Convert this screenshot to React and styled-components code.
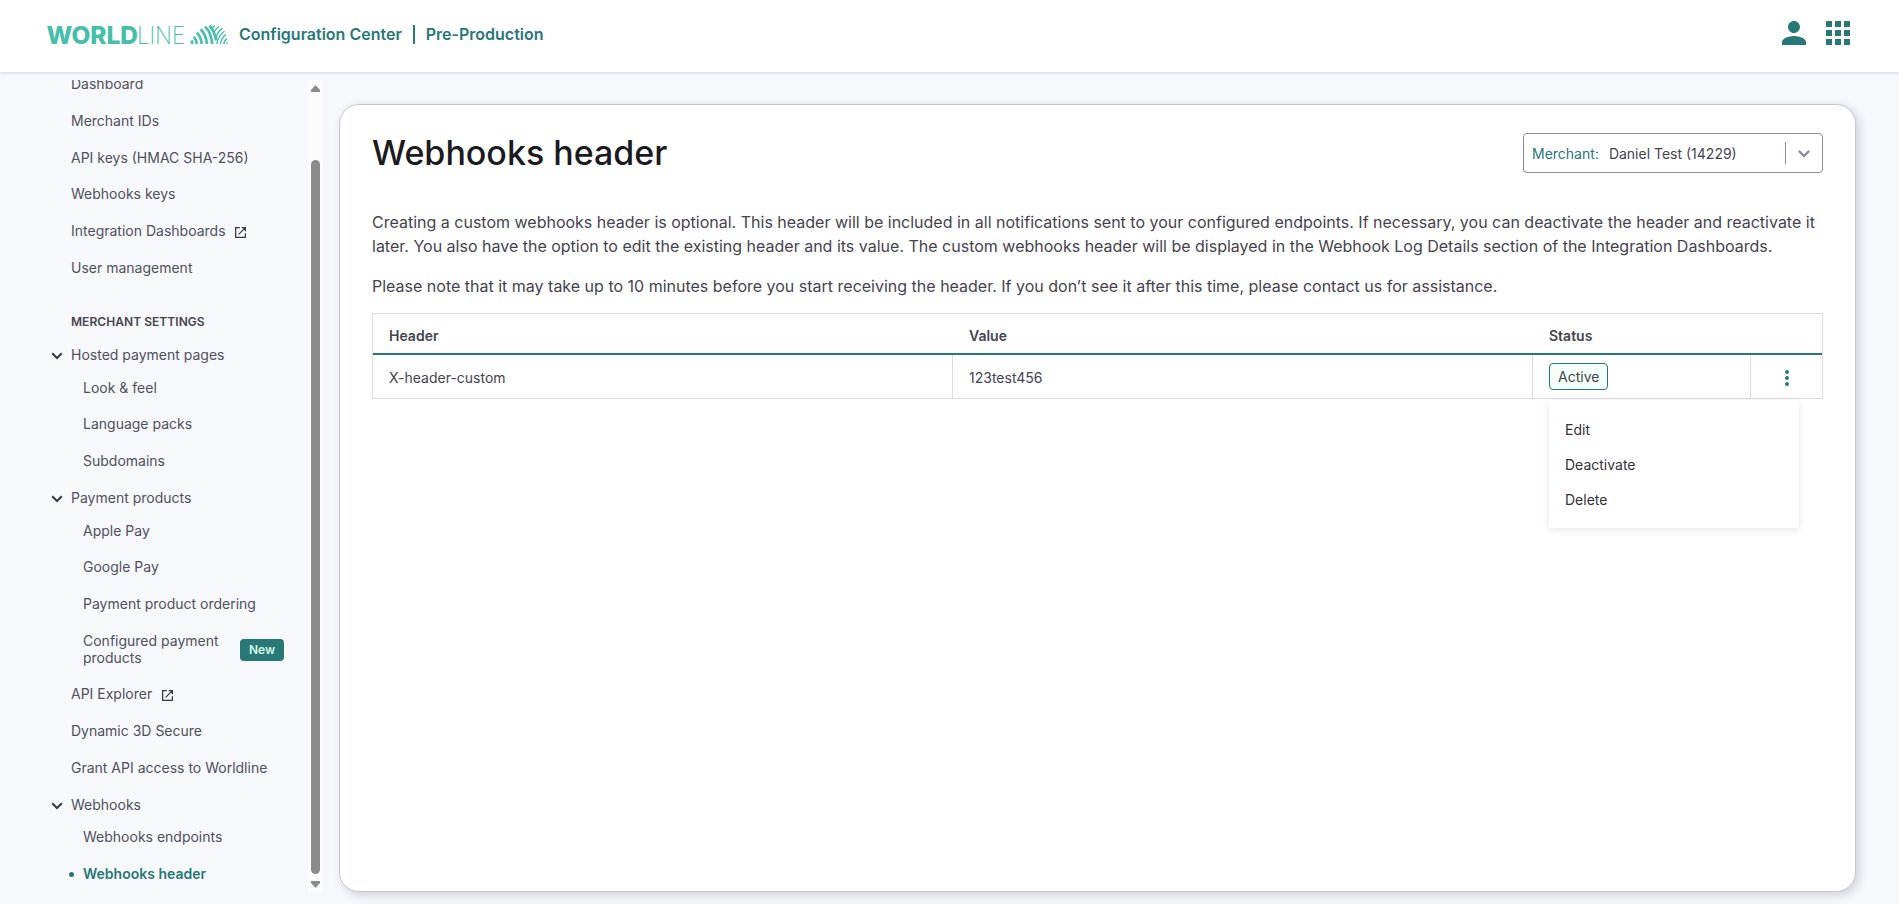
import React, { useState } from 'react';
import styled, { createGlobalStyle, css } from 'styled-components';

const GlobalStyle = createGlobalStyle`
  * {
    box-sizing: border-box;
  }

  body {
    margin: 0;
    overflow: hidden;
    background: #f7f8fc;
    color: #46434f;
    font-family: Inter, 'Liberation Sans', sans-serif;
  }
`;

const Page = styled.div`
  display: flex;
  flex-direction: column;
  height: 100vh;
`;

const TopBar = styled.header`
  display: flex;
  flex: none;
  align-items: flex-start;
  justify-content: space-between;
  height: 72px;
  padding: 0 49px 0 47px;
  background: #fff;
  box-shadow: 0 1px 3px rgba(70, 67, 79, 0.2);
`;

const Brand = styled.div`
  display: flex;
  align-items: center;
  height: 68px;
`;

const Logo = styled.svg`
  display: block;
  width: 181px;
  height: 20px;
  margin-right: 11px;
  overflow: visible;
`;

const BrandText = styled.span`
  font-size: 16px;
  font-weight: 600;
  line-height: 20px;
  color: #287877;
`;

const BrandDivider = styled.span`
  width: 2px;
  height: 19px;
  margin: 1px 11px 0;
  background: #287877;
`;

const TopActions = styled.div`
  display: flex;
  gap: 20px;
  padding-top: 21px;

  svg {
    display: block;
    width: 24px;
    height: 24px;
    fill: #287877;
  }
`;

const Body = styled.div`
  display: flex;
  flex: 1;
  min-height: 0;
  padding: 8px 43px 12px 0;
`;

const Sidebar = styled.nav`
  display: flex;
  flex-direction: column;
  justify-content: flex-end;
  width: 308px;
  padding: 0 24px 9px 51px;
  overflow: hidden;
`;

const NavRow = styled.div`
  display: flex;
  flex: none;
  align-items: center;
  margin-top: ${p => (p.$tight ? 16 : 20)}px;
  padding-left: ${p => (p.$child ? 32 : 20)}px;
  font-size: 14px;
  line-height: 16.76px;
  color: #50505c;

  ${p =>
    p.$active &&
    css`
      padding-left: 18px;
      font-weight: 600;
      color: #287877;
    `}
`;

const NavLabel = styled.span`
  ${p => p.$wrap && 'width: 157px;'}
`;

const ActiveDot = styled.span`
  width: 5px;
  height: 5px;
  margin-right: 9px;
  border-radius: 50%;
  background: #287877;
`;

const NavChevron = styled.svg`
  width: 12px;
  height: 8px;
  margin: 1px 8px 0 -20px;
  fill: none;
  stroke: #3b3944;
  stroke-width: 2;
`;

const ExternalIcon = styled.svg`
  width: 11px;
  height: 11px;
  margin: 1px 0 0 9.500px;
  fill: none;
  stroke: #3b3944;
  stroke-width: 1.4;
`;

const NavSection = styled.div`
  flex: none;
  margin: 37px 0 1px;
  padding-left: 20px;
  font-size: 12px;
  font-weight: 600;
  letter-spacing: 0.05px;
  line-height: 16px;
  color: #46434f;
`;

const NewBadge = styled.span`
  width: 44px;
  height: 22px;
  border-radius: 4px;
  background: #287877;
  color: #d5fbe7;
  font-size: 12px;
  font-weight: 600;
  line-height: 22px;
  text-align: center;
`;

const Scrollbar = styled.div`
  display: flex;
  flex: none;
  flex-direction: column;
  align-items: center;
  width: 15px;
  padding: 5px 0 4px;
  background: #fcfcfc;

  svg {
    display: block;
    width: 9px;
    height: 7px;
    fill: #8b8b8b;
  }
`;

const Thumb = styled.div`
  flex: 1;
  width: 9px;
  margin: 68px 0 7px;
  border-radius: 5px;
  background: #8b8b8b;
`;

const Card = styled.main`
  flex: 1;
  margin: 24px 0 0 16px;
  padding: 28px 32px;
  border: 1px solid #c8c8d0;
  border-radius: 20px;
  background: #fff;
  box-shadow: 3px 3px 10px rgba(70, 67, 79, 0.22);
`;

const CardHeader = styled.div`
  display: flex;
  align-items: center;
  justify-content: space-between;
  height: 40px;
  margin-bottom: 37px;
`;

const Title = styled.h1`
  margin: -1px 0 0;
  font-size: 34px;
  font-weight: 500;
  line-height: 40px;
  color: #1b1b1f;
`;

const Select = styled.div`
  display: flex;
  align-items: center;
  width: 300px;
  height: 40px;
  padding: 1px 12px 0 8px;
  border: 1px solid #8c8a9c;
  border-radius: 4px;
  font-size: 14px;
`;

const SelectLabel = styled.span`
  margin-right: 10px;
  color: #287877;
`;

const SelectValue = styled.span`
  flex: 1;
`;

const SelectDivider = styled.span`
  width: 1px;
  height: 22px;
  margin: 0 12px 2px 0;
  background: #8c8a9c;
`;

const SelectChevron = styled.svg`
  width: 12px;
  height: 8px;
  fill: none;
  stroke: #8c8a9c;
  stroke-width: 2.4;
  stroke-linecap: round;
`;

const Text = styled.p`
  margin: 0 0 16px;
  font-size: 16px;
  line-height: 24px;
`;

const Table = styled.div`
  margin-top: -1px;
  border: 1px solid #dbdae2;
  font-size: 14px;
`;

const Row = styled.div`
  display: grid;
  grid-template-columns: 580px 580px 218px 1fr;
  height: ${p => (p.$head ? 41 : 43)}px;
  border-bottom: ${p => (p.$head ? '2px solid #287877' : '0')};
  font-weight: ${p => (p.$head ? 600 : 400)};
`;

const Cell = styled.div`
  position: relative;
  display: flex;
  align-items: center;
  justify-content: ${p => (p.$center ? 'center' : 'flex-start')};
  padding: ${p => (p.$center ? '3px 0 0' : p.$divided ? '1px 16px 0' : '4px 16px 0')};
  ${p => p.$divided && 'border-right: 1px solid #dbdae2;'}
`;

const StatusTag = styled.span`
  height: 27px;
  margin-top: -1px;
  padding: 0 8px;
  border: 1px solid #287877;
  border-radius: 4px;
  background: #f3fff8;
  line-height: 25px;
`;

const MoreButton = styled.button`
  display: flex;
  padding: 0;
  border: 0;
  background: none;
  cursor: pointer;

  svg {
    width: 4px;
    height: 16px;
    fill: #287877;
  }
`;

const Menu = styled.ul`
  position: absolute;
  top: 45px;
  right: 23px;
  width: 250px;
  height: 128px;
  margin: 0;
  padding: 12px 16px;
  background: #fff;
  box-shadow: 0 2px 8px rgba(0, 0, 0, 0.1);
  list-style: none;
`;

const MenuItem = styled.li`
  line-height: 35px;
  color: #33313b;
  cursor: pointer;
`;

const navItems = [
  { label: 'Dashboard' },
  { label: 'Merchant IDs' },
  { label: 'API keys (HMAC SHA-256)' },
  { label: 'Webhooks keys' },
  { label: 'Integration Dashboards', external: true },
  { label: 'User management' },
  { section: 'MERCHANT SETTINGS' },
  { label: 'Hosted payment pages', group: true, tight: true },
  { label: 'Look & feel', child: true, tight: true },
  { label: 'Language packs', child: true },
  { label: 'Subdomains', child: true },
  { label: 'Payment products', group: true },
  { label: 'Apple Pay', child: true, tight: true },
  { label: 'Google Pay', child: true },
  { label: 'Payment product ordering', child: true },
  { label: 'Configured payment products', child: true, isNew: true },
  { label: 'API Explorer', external: true },
  { label: 'Dynamic 3D Secure' },
  { label: 'Grant API access to Worldline' },
  { label: 'Webhooks', group: true },
  { label: 'Webhooks endpoints', child: true, tight: true },
  { label: 'Webhooks header', child: true, active: true },
];

function WorldlineLogo() {
  return (
    <Logo viewBox="0 -1 181 20" fill="#46beaa">
      <text x="-0.5" y="19" fontSize="24.8" fontWeight="800" textLength="91.5" lengthAdjust="spacingAndGlyphs">
        WORLD
      </text>
      <text x="90" y="19" fontSize="24.8" fontWeight="200" textLength="48" lengthAdjust="spacingAndGlyphs">
        LINE
      </text>
      <g fill="none" stroke="#46beaa">
        <g strokeWidth="2.7">
          <path d="M145.200 19c0-1.500-.2-2.600-.7-3.600" />
          <path d="M149.800 19c-.3-3-1.300-5.300-3-7.200" />
          <path d="M154.800 19c-.5-4.600-2.100-8.300-4.900-11.300" />
          <path d="M160 19c-.6-6.200-2.700-11.200-6.400-14.800" />
          <path d="M165.200 19c-.7-8-3-13.800-7.200-17.300" />
          <path d="M169.200 15.500c-1.100-6.500-3.300-11.200-6.700-14.800" />
        </g>
        <g strokeWidth="1.400">
          <path d="M164.700 4c.8-1.300 1.800-2.400 3.100-3.300" />
          <path d="M166.700 8.500c1.100-3 2.800-5.400 5.200-7.200" />
          <path d="M168.700 13.500c1.200-4.500 3.500-8 6.700-10.400" />
          <path d="M169.800 19c.9-5.600 3.700-10.100 7.700-13" />
          <path d="M173.400 19c.6-3.800 2.500-7.100 5.400-9.400" />
          <path d="M176.800 19c.3-2.100 1.300-4 3-5.400" />
          <path d="M179.800 19c.1-.7.400-1.200.7-1.700" />
        </g>
      </g>
    </Logo>
  );
}

function NavEntry({ item }) {
  if (item.section) return <NavSection>{item.section}</NavSection>;

  return (
    <NavRow $child={item.child} $active={item.active} $tight={item.tight}>
      {item.group && (
        <NavChevron viewBox="0 0 12 8">
          <path d="M1.200 1.200 6 6l4.800-4.800" />
        </NavChevron>
      )}
      {item.active && <ActiveDot />}
      <NavLabel $wrap={item.isNew}>{item.label}</NavLabel>
      {item.external && (
        <ExternalIcon viewBox="0 0 12 12">
          <path d="M5.300.7H.7v10.600h10.600V6.700M7.300.7h4v4M11.300.7 4 8" />
        </ExternalIcon>
      )}
      {item.isNew && <NewBadge>New</NewBadge>}
    </NavRow>
  );
}

export default function App() {
  const [menuOpen, setMenuOpen] = useState(true);

  return (
    <Page>
      <GlobalStyle />
      <TopBar>
        <Brand>
          <WorldlineLogo />
          <BrandText>Configuration Center</BrandText>
          <BrandDivider />
          <BrandText>Pre-Production</BrandText>
        </Brand>
        <TopActions>
          <svg viewBox="4 4 16 16">
            <path d="M12 12c2.210 0 4-1.790 4-4s-1.790-4-4-4-4 1.790-4 4 1.790 4 4 4zm0 2c-2.670 0-8 1.340-8 4v2h16v-2c0-2.660-5.330-4-8-4z" />
          </svg>
          <svg viewBox="0 0 24 24">
            <path d="M0 0h6v6H0zM9 0h6v6H9zM18 0h6v6h-6zM0 9h6v6H0zM9 9h6v6H9zM18 9h6v6h-6zM0 18h6v6H0zM9 18h6v6H9zM18 18h6v6h-6z" />
          </svg>
        </TopActions>
      </TopBar>

      <Body>
        <Sidebar>
          {navItems.map(item => (
            <NavEntry key={item.label || item.section} item={item} />
          ))}
        </Sidebar>
        <Scrollbar>
          <svg viewBox="0 0 9 7">
            <path d="M4.500 0 9 5v2H0V5z" />
          </svg>
          <Thumb />
          <svg viewBox="0 0 9 7">
            <path d="M4.500 7 9 2V0H0v2z" />
          </svg>
        </Scrollbar>

        <Card>
          <CardHeader>
            <Title>Webhooks header</Title>
            <Select>
              <SelectLabel>Merchant:</SelectLabel>
              <SelectValue>Daniel Test (14229)</SelectValue>
              <SelectDivider />
              <SelectChevron viewBox="0 0 12 8">
                <path d="M1.500 1.500 6 6l4.500-4.500" />
              </SelectChevron>
            </Select>
          </CardHeader>

          <Text>
            Creating a custom webhooks header is optional. This header will be included in all
            notifications sent to your configured endpoints. If necessary, you can deactivate the
            header and reactivate it later. You also have the option to edit the existing header and
            its value. The custom webhooks header will be displayed in the Webhook Log Details
            section of the Integration Dashboards.
          </Text>
          <Text>
            Please note that it may take up to 10 minutes before you start receiving the header. If
            you don’t see it after this time, please contact us for assistance.
          </Text>

          <Table>
            <Row $head>
              <Cell>Header</Cell>
              <Cell>Value</Cell>
              <Cell>Status</Cell>
              <Cell />
            </Row>
            <Row>
              <Cell $divided>X-header-custom</Cell>
              <Cell $divided>123test456</Cell>
              <Cell $divided>
                <StatusTag>Active</StatusTag>
              </Cell>
              <Cell $center>
                <MoreButton aria-label="Actions" onClick={() => setMenuOpen(!menuOpen)}>
                  <svg viewBox="0 0 4 16">
                    <circle cx="2" cy="2" r="2" />
                    <circle cx="2" cy="8" r="2" />
                    <circle cx="2" cy="14" r="2" />
                  </svg>
                </MoreButton>
                {menuOpen && (
                  <Menu>
                    <MenuItem>Edit</MenuItem>
                    <MenuItem>Deactivate</MenuItem>
                    <MenuItem>Delete</MenuItem>
                  </Menu>
                )}
              </Cell>
            </Row>
          </Table>
        </Card>
      </Body>
    </Page>
  );
}
